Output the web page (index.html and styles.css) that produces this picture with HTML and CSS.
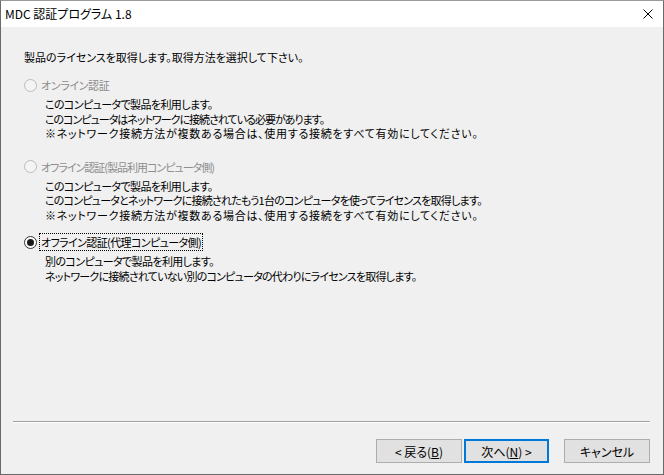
FILE: index.html
```html
<!DOCTYPE html>
<html lang="ja">
<head>
<meta charset="utf-8">
<title>MDC 認証プログラム 1.8</title>
<link rel="stylesheet" href="styles.css">
</head>
<body>
<div class="window">
  <div class="titlebar">
    <span class="title">MDC 認証プログラム 1.8</span>
    <svg class="close" width="10" height="10" viewBox="0 0 10 10"><path d="M0.5 0.5 L9.5 9.5 M9.5 0.5 L0.5 9.5" stroke="#000" stroke-width="1" fill="none"/></svg>
  </div>
  <div class="content">
    <p class="intro sp-wide">製品のライセンスを取得します。取得方法を選択して下さい。</p>

    <div class="option opt1 disabled">
      <div class="radio-row"><span class="radio"></span><span class="label">オンライン認証</span></div>
      <div class="desc">
        <p class="sp-tight">このコンピュータで製品を利用します。</p>
        <p class="sp-tighter">このコンピュータはネットワークに接続されている必要があります。</p>
        <p class="sp-loose">※ネットワーク接続方法が複数ある場合は、使用する接続をすべて有効にしてください。</p>
      </div>
    </div>

    <div class="option opt2 disabled">
      <div class="radio-row"><span class="radio"></span><span class="label sp-tighter">オフライン認証(製品利用コンピュータ側)</span></div>
      <div class="desc">
        <p class="sp-tight">このコンピュータで製品を利用します。</p>
        <p class="sp-kana">このコンピュータとネットワークに接続されたもう1台のコンピュータを使ってライセンスを取得します。</p>
        <p class="sp-loose">※ネットワーク接続方法が複数ある場合は、使用する接続をすべて有効にしてください。</p>
      </div>
    </div>

    <div class="option opt3 selected">
      <div class="radio-row"><span class="radio"><span class="dot"></span></span><span class="label focus sp-tight">オフライン認証(代理コンピュータ側)</span></div>
      <div class="desc">
        <p class="sp-tight">別のコンピュータで製品を利用します。</p>
        <p class="sp-kana">ネットワークに接続されていない別のコンピュータの代わりにライセンスを取得します。</p>
      </div>
    </div>
  </div>
  <div class="footer">
    <div class="separator"></div>
    <div class="buttons">
      <button class="btn">&lt; 戻る(<u>B</u>)</button>
      <button class="btn default">次へ(<u>N</u>) &gt;</button>
      <button class="btn cancel">キャンセル</button>
    </div>
  </div>
</div>
</body>
</html>
```
FILE: styles.css
```css
* { box-sizing: border-box; }
html, body { margin: 0; padding: 0; }
body {
  width: 664px;
  height: 475px;
  overflow: hidden;
  font-family: "Noto Sans CJK JP", "Noto Sans", sans-serif;
  font-size: 12px;
  font-feature-settings: "palt";
  color: #000;
}
p { margin: 0; }
.window {
  width: 664px;
  height: 475px;
  border: 1px solid #6a6a6a;
  border-top-color: #9a9a9a;
  background: #f0f0f0;
  display: flex;
  flex-direction: column;
}
.titlebar {
  height: 26px;
  background: #fff;
  display: flex;
  align-items: center;
  justify-content: space-between;
  padding: 0 10px 0 4px;
  flex: none;
}
.title { font-size: 12px; line-height: 14px; }
.close { display: block; }
.content {
  flex: 1;
  padding: 22px 0 0 23px;
  font-size: 11px;
  letter-spacing: -0.35px;
}
.intro { line-height: 16px; }
.opt1 { margin-top: 11px; }
.opt2 { margin-top: 17px; }
.opt3 { margin-top: 11px; }
.radio-row {
  display: flex;
  align-items: center;
  height: 18px;
}
.radio {
  width: 13px;
  height: 13px;
  border-radius: 50%;
  border: 1px solid #333;
  background: #fff;
  display: flex;
  align-items: center;
  justify-content: center;
  margin-right: 3px;
  flex: none;
}
.disabled .radio { border-color: #bcbcbc; background: #f4f4f4; }
.disabled .label { color: #8d8d8d; }
.dot { width: 7px; height: 7px; border-radius: 50%; background: #1a1a1a; }
.label { line-height: 16px; padding: 0 1px; }
.focus { outline: 1px dotted #000; outline-offset: 0; }
.desc { margin-left: 21px; margin-top: 3px; }
.desc p { line-height: 14.5px; }

.sp-wide { letter-spacing: 0; }
.sp-loose { letter-spacing: 0.72px; }
.sp-tight { letter-spacing: -0.6px; }
.sp-kana { letter-spacing: -0.77px; }
.sp-tighter { letter-spacing: -1px; }

.footer { flex: none; padding: 0 13px 11px 12px; }
.separator { height: 2px; border-top: 1px solid #a0a0a0; border-bottom: 1px solid #fff; }
.buttons {
  display: flex;
  justify-content: flex-end;
  margin-top: 16px;
}
.btn {
  width: 86px;
  height: 24px;
  background: #e1e1e1;
  border: 1px solid #adadad;
  font-family: inherit;
  font-size: 12px;
  font-feature-settings: "palt";
  color: #000;
  padding: 0;
  margin: 0;
}
.btn.default { border: 2px solid #0078d7; margin-left: 2px; width: 85px; }
.btn.cancel { margin-left: 15px; }
```
